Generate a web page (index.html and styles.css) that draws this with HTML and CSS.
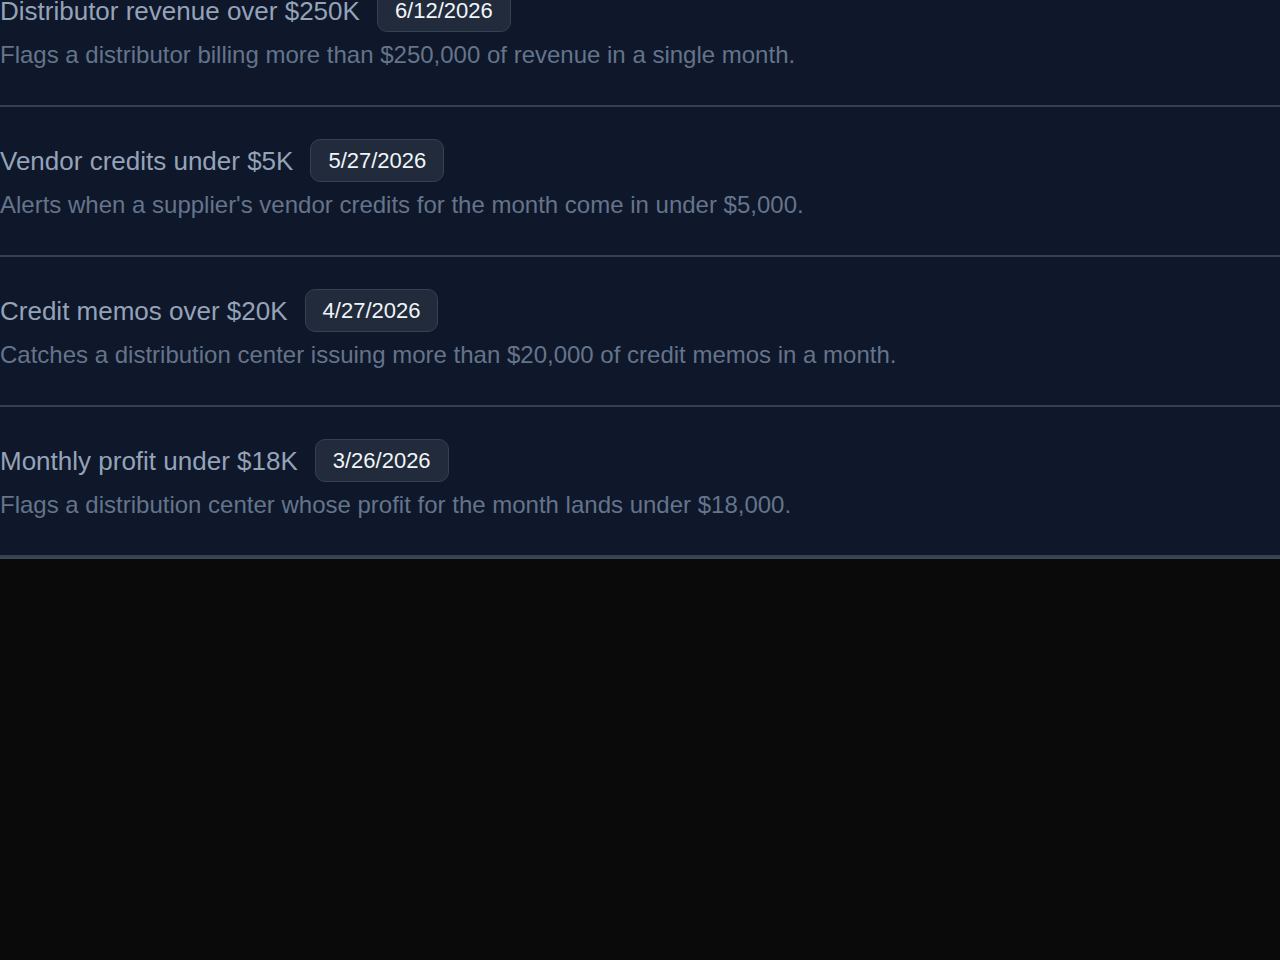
FILE: index.html
```html
<!DOCTYPE html>
<html lang="en">
<head>
<meta charset="utf-8">
<title>Alerts</title>
<link rel="stylesheet" href="styles.css">
</head>
<body>
<ul class="rules">
  <li class="rule">
    <div class="rule-head">
      <span class="rule-title">Distributor revenue over $250K</span>
      <span class="rule-date">6/12/2026</span>
    </div>
    <p class="rule-desc">Flags a distributor billing more than $250,000 of revenue in a single month.</p>
  </li>
  <li class="rule">
    <div class="rule-head">
      <span class="rule-title">Vendor credits under $5K</span>
      <span class="rule-date">5/27/2026</span>
    </div>
    <p class="rule-desc">Alerts when a supplier's vendor credits for the month come in under $5,000.</p>
  </li>
  <li class="rule">
    <div class="rule-head">
      <span class="rule-title">Credit memos over $20K</span>
      <span class="rule-date">4/27/2026</span>
    </div>
    <p class="rule-desc">Catches a distribution center issuing more than $20,000 of credit memos in a month.</p>
  </li>
  <li class="rule">
    <div class="rule-head">
      <span class="rule-title">Monthly profit under $18K</span>
      <span class="rule-date">3/26/2026</span>
    </div>
    <p class="rule-desc">Flags a distribution center whose profit for the month lands under $18,000.</p>
  </li>
</ul>
</body>
</html>
```
FILE: styles.css
```css
html, body {
  margin: 0;
  padding: 0;
  background: #0a0a0a;
  font-family: "Liberation Sans", Arial, Helvetica, sans-serif;
}

.rules {
  list-style: none;
  margin: -43px 0 0 0;
  padding: 0;
  background: #0f172a;
  border-bottom: 2px solid #3b4759;
}

.rule {
  padding: 32px 0 35px 0;
  border-bottom: 2px solid #334155;
}

.rule-head {
  display: flex;
  align-items: center;
  gap: 17px;
  height: 43px;
}

.rule-title {
  font-size: 26px;
  line-height: 30px;
  color: #94a3b8;
}

.rule-date {
  box-sizing: border-box;
  height: 43px;
  padding: 8px 17px 7px 17px;
  font-size: 22px;
  line-height: 26px;
  color: #f1f5f9;
  background: #212b3b;
  border: 1px solid #334155;
  border-radius: 10px;
}

.rule-desc {
  margin: 8px 0 0 0;
  font-size: 24px;
  line-height: 30px;
  color: #64748b;
}
```
